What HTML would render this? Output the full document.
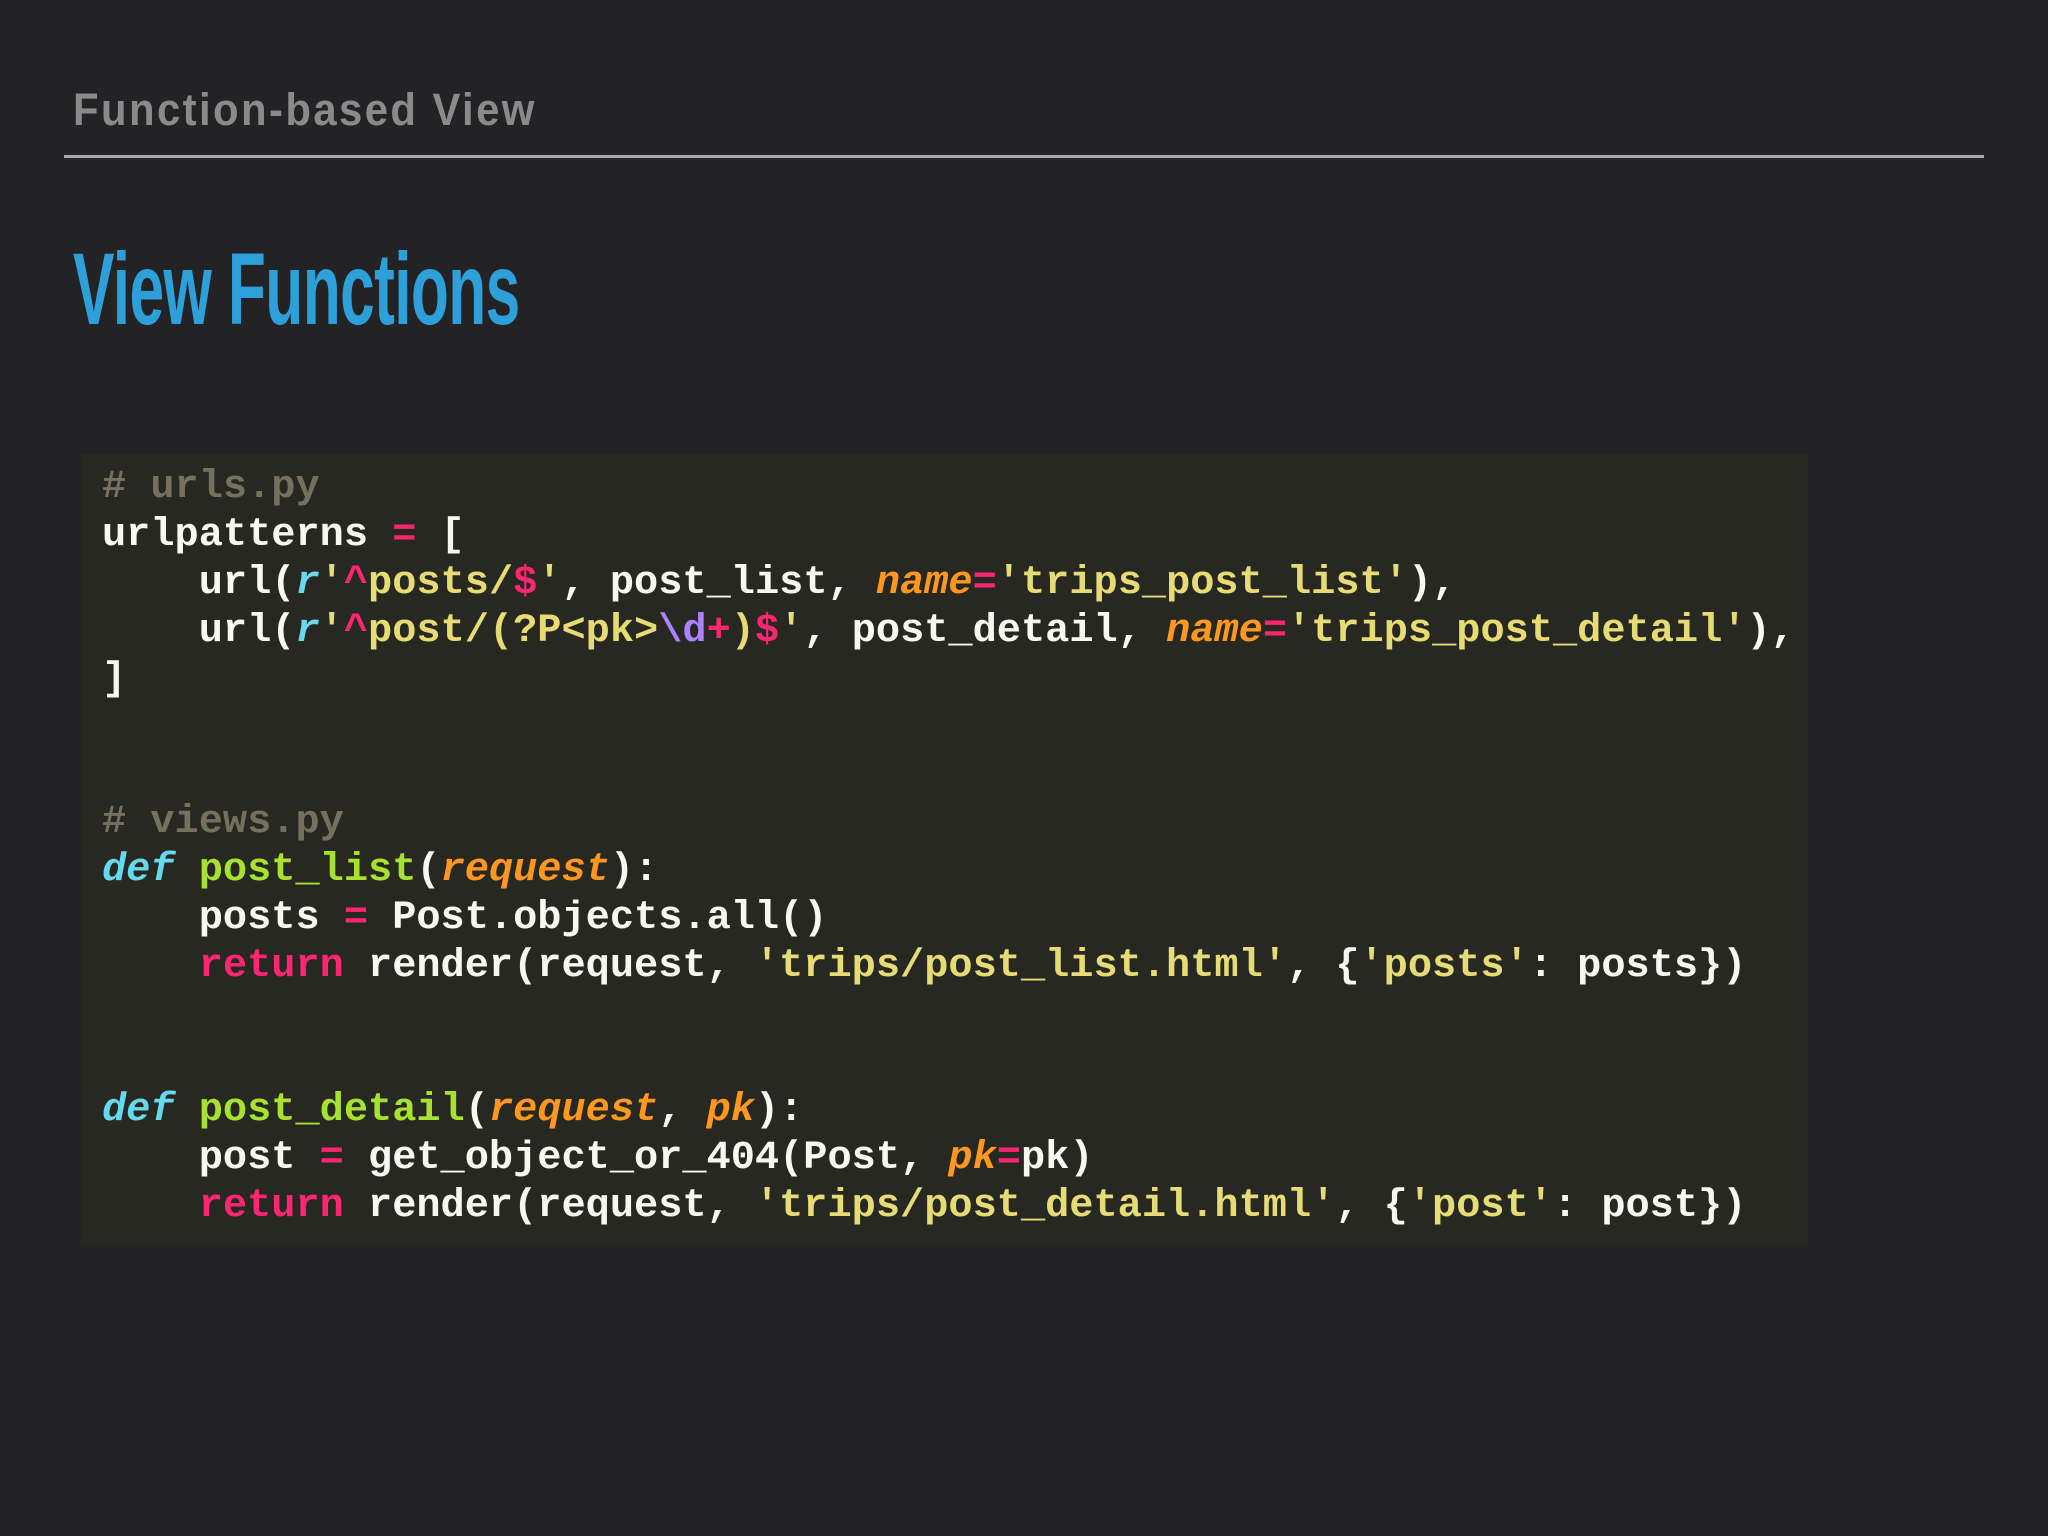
<!DOCTYPE html>
<html><head><meta charset="utf-8"><style>
html,body{margin:0;padding:0;background:#232224;}
body{width:2048px;height:1536px;position:relative;overflow:hidden;font-family:"Liberation Sans",sans-serif;}
.hdr{position:absolute;left:73px;top:82px;font-size:45px;color:#8a8a8a;letter-spacing:2.6px;font-weight:bold;line-height:56px;transform:scaleX(0.93);transform-origin:left top;}
.line{position:absolute;left:64px;top:155px;width:1920px;height:3px;background:#a9a9a9;}
.title{position:absolute;left:73px;top:234px;font-size:102px;font-weight:bold;color:#2d9fd9;line-height:110px;transform:scaleX(0.61);transform-origin:left top;letter-spacing:-1px;}
.code{position:absolute;left:81px;top:454px;width:1727px;height:791px;background:#272822;}
pre{position:absolute;left:21px;top:10px;margin:0;font-family:"Liberation Mono","DejaVu Sans Mono",monospace;font-size:40.3px;line-height:47.9px;color:#f8f8f2;font-weight:bold;}
.c{color:#75715e}.k{color:#f92672}.s{color:#e6db74}.o{color:#fd971f;font-style:italic}.y{color:#66d9ef;font-style:italic}.g{color:#a6e22e}.p{color:#ae81ff}
</style></head><body>
<div class="hdr">Function-based View</div>
<div class="line"></div>
<div class="title">View Functions</div>
<div class="code"><pre><span class="c"># urls.py</span>
urlpatterns <span class="k">=</span> [
    url(<span class="y">r</span><span class="s">'</span><span class="k">^</span><span class="s">posts/</span><span class="k">$</span><span class="s">'</span>, post_list, <span class="o">name</span><span class="k">=</span><span class="s">'trips_post_list'</span>),
    url(<span class="y">r</span><span class="s">'</span><span class="k">^</span><span class="s">post/(?P&lt;pk&gt;</span><span class="p">\d</span><span class="k">+</span><span class="s">)</span><span class="k">$</span><span class="s">'</span>, post_detail, <span class="o">name</span><span class="k">=</span><span class="s">'trips_post_detail'</span>),
]


<span class="c"># views.py</span>
<span class="y">def</span> <span class="g">post_list</span>(<span class="o">request</span>):
    posts <span class="k">=</span> Post.objects.all()
    <span class="k">return</span> render(request, <span class="s">'trips/post_list.html'</span>, {<span class="s">'posts'</span>: posts})


<span class="y">def</span> <span class="g">post_detail</span>(<span class="o">request</span>, <span class="o">pk</span>):
    post <span class="k">=</span> get_object_or_404(Post, <span class="o">pk</span><span class="k">=</span>pk)
    <span class="k">return</span> render(request, <span class="s">'trips/post_detail.html'</span>, {<span class="s">'post'</span>: post})</pre></div>
</body></html>
